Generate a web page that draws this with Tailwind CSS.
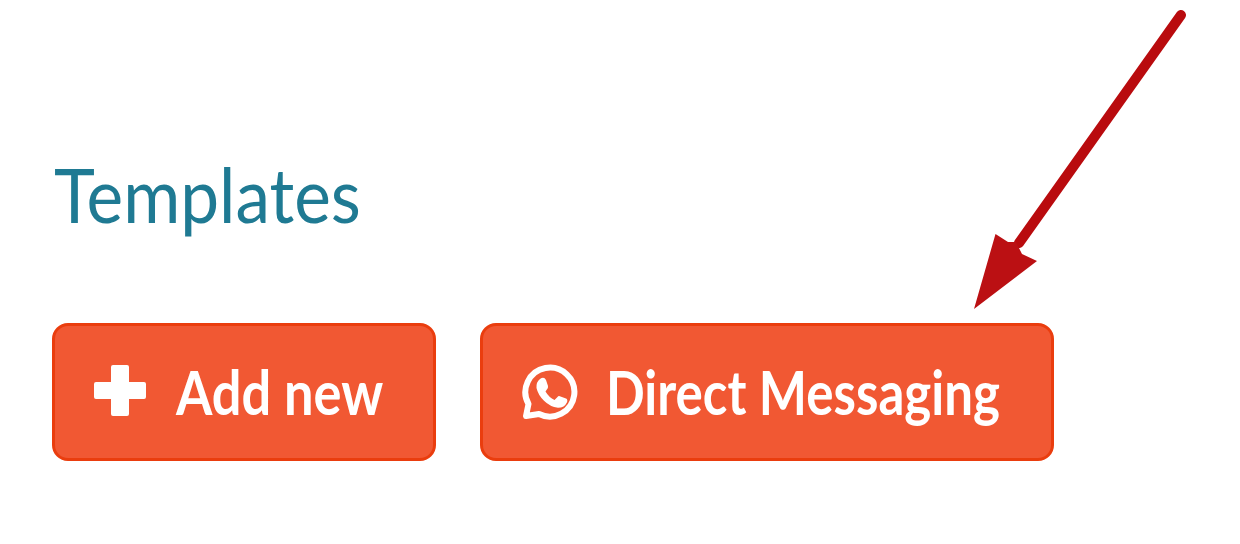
<!DOCTYPE html>
<html lang="en">
<head>
    <meta charset="UTF-8">
    <meta name="viewport" content="width=device-width, initial-scale=1.0">
    <title>Templates</title>
    <script src="https://cdn.jsdelivr.net/npm/@tailwindcss/browser@4"></script>
</head>
<body class="bg-white overflow-hidden font-['Lato',sans-serif]">
    <main class="relative h-[544px] pl-[52px] pt-[149px]">
        <h1 class="ml-[2px] h-[90px] w-fit text-[75px] leading-[90px] text-[#1f7a93] origin-left scale-x-[0.925]">Templates</h1>

        <div class="mt-[84px] flex gap-[44px]">
            <button class="flex h-[138px] w-[384px] items-center rounded-[16px] border-[3px] border-[#ea3d0e] bg-[#f15833] pl-[38px] text-white">
                <svg class="size-[54px] shrink-0 -mt-[3px]" viewBox="0 0 54 54" fill="currentColor">
                    <path d="M20 1h14q2 0 2 2v15h15q2 0 2 2v13q0 2-2 2H36v15q0 2-2 2H20q-2 0-2-2V35H3q-2 0-2-2V20q0-2 2-2h15V3q0-2 2-2z"/>
                </svg>
                <span class="-mt-[3px] ml-[29px] w-[208px] whitespace-nowrap text-left text-[62px] font-bold leading-[74px] origin-left scale-x-[0.845]">Add new</span>
            </button>

            <button class="flex h-[138px] w-[574px] items-center rounded-[16px] border-[3px] border-[#ea3d0e] bg-[#f15833] pl-[38px] text-white">
                <!-- whatsapp -->
                <svg class="size-[58px] shrink-0 -mt-px" viewBox="0 0 58 58" fill="none">
                    <path d="M5 53L7.500 41A24.500 24.500 0 1 1 18 51z" stroke="currentColor" stroke-width="6" stroke-linejoin="round"/>
                    <path d="M19 16q4-3 6 1l2 6q.5 2-1.500 4l-1 1.500q3.500 6 9 8.500l3-3q1-1.500 3-.5l5.500 2q2 1 1 3.800-2.500 5.500-9 5.500-8-1-14-7T15.500 25q-.5-6 3.500-9z" fill="currentColor"/>
                </svg>
                <span class="-mt-[3px] ml-[27px] w-[395px] whitespace-nowrap text-left text-[62px] font-bold leading-[74px] origin-left scale-x-[0.823]">Direct Messaging</span>
            </button>
        </div>

        <svg class="pointer-events-none absolute left-[960px] top-0 h-[320px] w-[240px]" viewBox="960 0 240 320">
            <path d="M1181 15L1019 243" stroke="#b90b0e" stroke-width="10" stroke-linecap="round"/>
            <path d="M974 309L995.500 234 1008 242 1016 242 1022 254 1037 261z" fill="#bb1013"/>
        </svg>
    </main>
</body>
</html>
